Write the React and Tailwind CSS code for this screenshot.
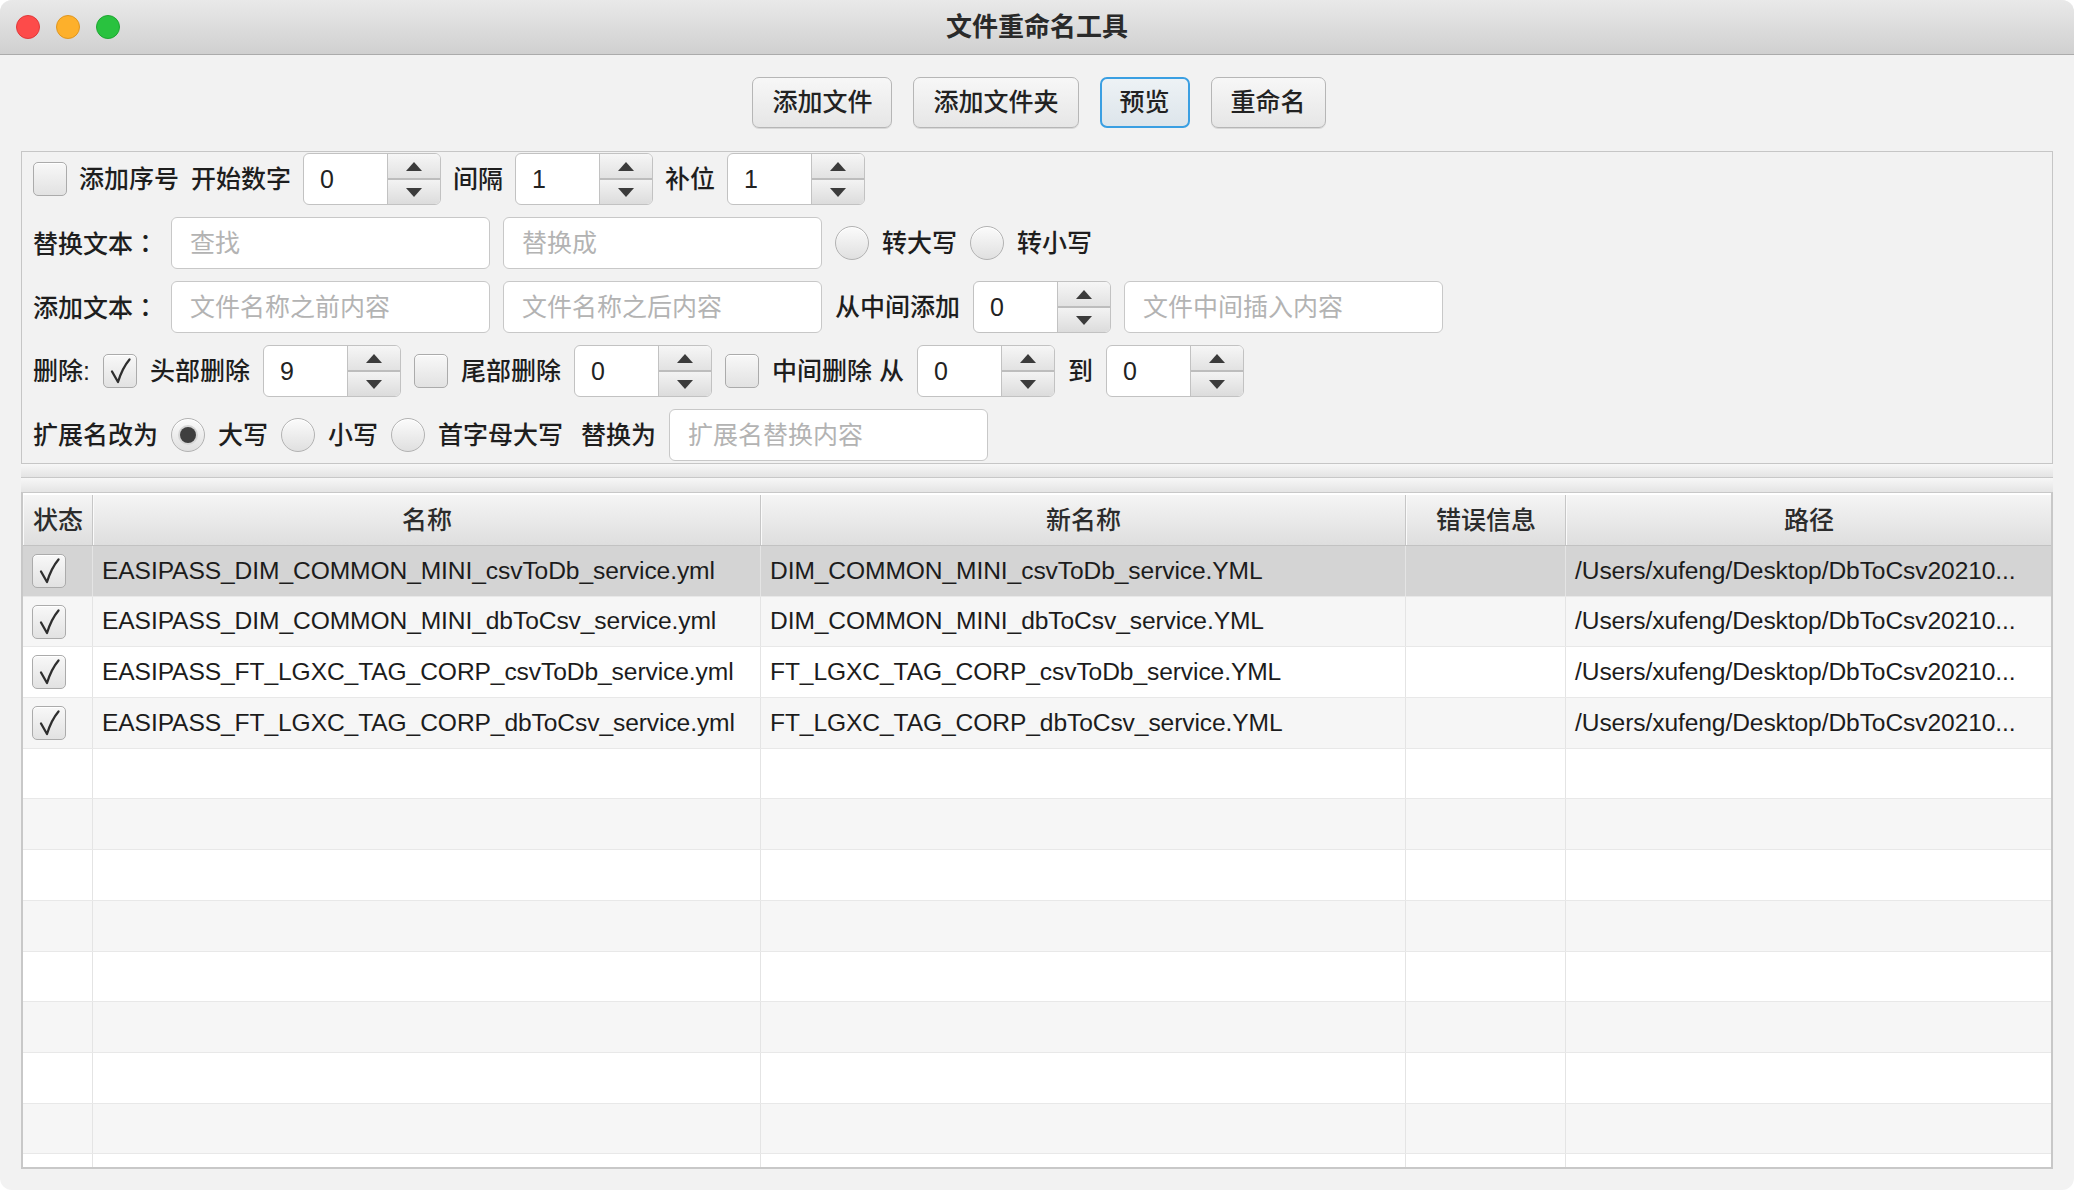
import React from "react";

const FONT = "font-['Liberation_Sans','Noto_Sans_CJK_SC',sans-serif]";

function CheckMark() {
  return (
    <svg width="26" height="28" viewBox="0 0 26 28">
      <path
        d="M5 14.5 L11 25 C13.5 17 17 9 22.5 2.5"
        fill="none"
        stroke="#2e2e2e"
        strokeWidth="2.3"
        strokeLinecap="round"
        strokeLinejoin="round"
      />
    </svg>
  );
}

function Check({ checked }) {
  return (
    <div className="w-[34px] h-[34px] shrink-0 rounded-[5px] border border-[#ababab] bg-linear-to-b from-[#f8f8f8] to-[#e2e2e2] shadow-[inset_0_1px_0_#ffffff] flex items-center justify-center">
      {checked && <CheckMark />}
    </div>
  );
}

function Radio({ selected }) {
  return (
    <div className="w-[34px] h-[34px] shrink-0 rounded-full border border-[#b2b2b2] bg-linear-to-b from-[#fbfbfb] to-[#e0e0e0] shadow-[inset_0_1px_0_#ffffff] flex items-center justify-center">
      {selected && (
        <div className="w-[16px] h-[16px] rounded-full bg-[#3f3f3f] shadow-[0_0_0_2px_#d6d6d6]" />
      )}
    </div>
  );
}

function Up() {
  return (
    <svg width="16" height="9" viewBox="0 0 16 9">
      <polygon points="8,0 16,9 0,9" fill="#3b3b3b" />
    </svg>
  );
}
function Down() {
  return (
    <svg width="16" height="9" viewBox="0 0 16 9">
      <polygon points="0,0 16,0 8,9" fill="#3b3b3b" />
    </svg>
  );
}

function Spinner({ value }) {
  return (
    <div className="flex h-[52px] w-[138px] shrink-0 rounded-[6px] border border-[#c2c2c2] overflow-hidden bg-white">
      <div className="flex-1 flex items-center pl-[16px] text-[25px] text-[#222222] leading-none">
        {value}
      </div>
      <div className="w-[53px] flex flex-col border-l border-[#c2c2c2]">
        <div className="flex-1 flex items-center justify-center border-b-2 border-[#bdbdbd] bg-linear-to-b from-[#f6f6f6] to-[#e2e2e2]">
          <Up />
        </div>
        <div className="flex-1 flex items-center justify-center bg-linear-to-b from-[#f3f3f3] to-[#dcdcdc]">
          <Down />
        </div>
      </div>
    </div>
  );
}

function Field({ placeholder }) {
  return (
    <div className="h-[52px] w-[319px] shrink-0 rounded-[6px] border border-[#c8c8c8] bg-white flex items-center pl-[18px] text-[25px] text-[#b3b3b3] leading-none">
      {placeholder}
    </div>
  );
}

function Label({ children, className = "" }) {
  return (
    <span className={"text-[25px] leading-none text-[#1e1e1e] font-medium whitespace-nowrap " + className}>
      {children}
    </span>
  );
}

function Colon() {
  return <span className="font-['Noto_Sans_CJK_TC',sans-serif]">：</span>;
}

function Btn({ children, focused }) {
  return focused ? (
    <div className="h-[51px] px-[18px] rounded-[7px] border-2 border-[#3a9fe2] bg-linear-to-b from-[#edf2f5] to-[#dde5eb] flex items-center text-[25px] leading-none text-[#222222] font-medium">
      {children}
    </div>
  ) : (
    <div className="h-[51px] px-[19px] rounded-[7px] border border-[#b6b6b6] bg-linear-to-b from-[#f7f7f7] to-[#e6e6e6] shadow-[0_1px_0_#d8d8d8] flex items-center text-[25px] leading-none text-[#222222] font-medium">
      {children}
    </div>
  );
}

const rows = [
  {
    name: "EASIPASS_DIM_COMMON_MINI_csvToDb_service.yml",
    newName: "DIM_COMMON_MINI_csvToDb_service.YML",
  },
  {
    name: "EASIPASS_DIM_COMMON_MINI_dbToCsv_service.yml",
    newName: "DIM_COMMON_MINI_dbToCsv_service.YML",
  },
  {
    name: "EASIPASS_FT_LGXC_TAG_CORP_csvToDb_service.yml",
    newName: "FT_LGXC_TAG_CORP_csvToDb_service.YML",
  },
  {
    name: "EASIPASS_FT_LGXC_TAG_CORP_dbToCsv_service.yml",
    newName: "FT_LGXC_TAG_CORP_dbToCsv_service.YML",
  },
];

const PATH = "/Users/xufeng/Desktop/DbToCsv20210...";

function HeaderCell({ children, last }) {
  return (
    <div
      className={
        "flex items-center justify-center border-l border-[#fafafa] " +
        (last ? "" : "border-r border-r-[#c6c6c6]")
      }
    >
      <span className="text-[25px] leading-none text-[#2c2c2c] font-medium">{children}</span>
    </div>
  );
}

function Cell({ children, last }) {
  return (
    <div
      className={
        "flex items-center pl-[9px] pr-[10px] overflow-hidden " +
        (last ? "" : "border-r border-[#e4e4e4]")
      }
    >
      <span className="text-[24.6px] leading-none text-[#1c1c1c] whitespace-nowrap tracking-[-0.1px]">
        {children}
      </span>
    </div>
  );
}

export default function App() {
  const total = 13;
  const body = [];
  for (let i = 0; i < total; i++) {
    const r = rows[i];
    const bg = i === 0 ? "bg-[#d4d4d4]" : i % 2 === 1 ? "bg-[#f6f6f6]" : "bg-white";
    body.push(
      <div
        key={i}
        className={"grid grid-cols-[70px_668px_645px_160px_1fr] h-[50.7px] shrink-0 border-b border-[#e8e8e8] " + bg}
      >
        <div className="flex items-center pl-[9px] border-r border-[#e4e4e4]">
          {r && <Check checked />}
        </div>
        <Cell>{r ? r.name : ""}</Cell>
        <Cell>{r ? r.newName : ""}</Cell>
        <Cell>{""}</Cell>
        <Cell last>{r ? PATH : ""}</Cell>
      </div>
    );
  }

  return (
    <div className={"w-[2074px] h-[1190px] bg-white " + FONT}>
      <div className="w-full h-full rounded-[12px] overflow-hidden bg-[#f2f2f2] flex flex-col">
        {/* Title bar */}
        <div className="h-[55px] shrink-0 grid grid-cols-[1fr_auto_1fr] items-center bg-linear-to-b from-[#e9e9e9] to-[#d0d0d0] border-b border-[#ababab]">
          <div className="flex items-center gap-[16px] pl-[16px]">
            <div className="w-[24px] h-[24px] rounded-full bg-[#fd4b4a] border border-[#e0393a]" />
            <div className="w-[24px] h-[24px] rounded-full bg-[#fdb02b] border border-[#df9620]" />
            <div className="w-[24px] h-[24px] rounded-full bg-[#29c23f] border border-[#1ea631]" />
          </div>
          <div className="text-[26px] leading-none font-bold text-[#2a2a2a]">文件重命名工具</div>
          <div />
        </div>

        {/* Body */}
        <div className="flex-1 flex flex-col px-[21px] pb-[21px] min-h-0">
          {/* Buttons */}
          <div className="mt-[22px] flex justify-center gap-[21px] pl-[4px]">
            <Btn>添加文件</Btn>
            <Btn>添加文件夹</Btn>
            <Btn focused>预览</Btn>
            <Btn>重命名</Btn>
          </div>

          {/* Options panel */}
          <div className="mt-[23px] border border-[#c6c6c6] pt-[1px] pl-[11px] flex flex-col gap-[12px] h-[313px]">
            <div className="flex items-center gap-[12px] h-[52px]">
              <Check />
              <Label>添加序号</Label>
              <Label>开始数字</Label>
              <Spinner value="0" />
              <Label>间隔</Label>
              <Spinner value="1" />
              <Label>补位</Label>
              <Spinner value="1" />
            </div>
            <div className="flex items-center gap-[13px] h-[52px]">
              <Label>替换文本<Colon /></Label>
              <Field placeholder="查找" />
              <Field placeholder="替换成" />
              <Radio />
              <Label>转大写</Label>
              <Radio />
              <Label>转小写</Label>
            </div>
            <div className="flex items-center gap-[13px] h-[52px]">
              <Label>添加文本<Colon /></Label>
              <Field placeholder="文件名称之前内容" />
              <Field placeholder="文件名称之后内容" />
              <Label>从中间添加</Label>
              <Spinner value="0" />
              <Field placeholder="文件中间插入内容" />
            </div>
            <div className="flex items-center gap-[13px] h-[52px]">
              <Label>删除:</Label>
              <Check checked />
              <Label>头部删除</Label>
              <Spinner value="9" />
              <Check />
              <Label>尾部删除</Label>
              <Spinner value="0" />
              <Check />
              <Label>中间删除 从</Label>
              <Spinner value="0" />
              <Label>到</Label>
              <Spinner value="0" />
            </div>
            <div className="flex items-center gap-[13px] h-[52px]">
              <Label>扩展名改为</Label>
              <Radio selected />
              <Label>大写</Label>
              <Radio />
              <Label>小写</Label>
              <Radio />
              <Label>首字母大写</Label>
              <Label className="ml-[5px]">替换为</Label>
              <Field placeholder="扩展名替换内容" />
            </div>
          </div>

          {/* Split divider */}
          <div className="h-[14px] shrink-0 bg-linear-to-b from-[#f7f7f7] to-[#e4e4e4] border-b border-[#c8c8c8]" />
          <div className="h-[15px] shrink-0 bg-linear-to-b from-[#f7f7f7] to-[#e4e4e4] border-b border-[#c8c8c8]" />

          {/* Table */}
          <div className="flex-1 min-h-0 flex flex-col border-x-2 border-b-2 border-[#c8c8c8] bg-white overflow-hidden">
            <div className="grid grid-cols-[70px_668px_645px_160px_1fr] h-[51px] shrink-0 mt-[2px] bg-linear-to-b from-[#f5f5f5] to-[#dedede] border-b border-[#c2c2c2]">
              <HeaderCell>状态</HeaderCell>
              <HeaderCell>名称</HeaderCell>
              <HeaderCell>新名称</HeaderCell>
              <HeaderCell>错误信息</HeaderCell>
              <HeaderCell last>路径</HeaderCell>
            </div>
            <div className="flex-1 min-h-0 flex flex-col overflow-hidden">{body}</div>
          </div>
        </div>
      </div>
    </div>
  );
}
